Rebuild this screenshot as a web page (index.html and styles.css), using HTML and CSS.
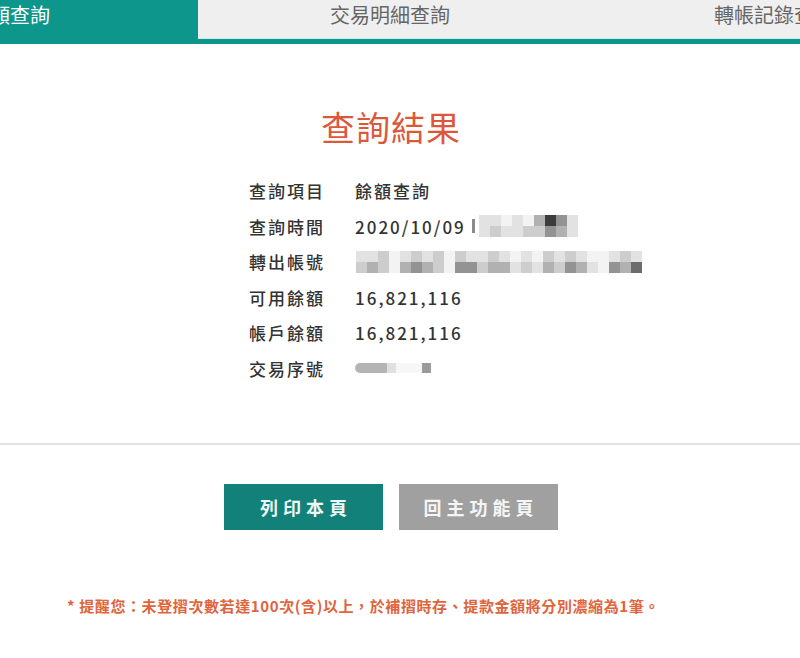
FILE: index.html
```html
<!DOCTYPE html>
<html lang="zh-Hant">
<head>
<meta charset="utf-8">
<title>查詢結果</title>
<link rel="stylesheet" href="styles.css">
</head>
<body>
<nav class="tabs">
  <div class="tab tab-active">餘額查詢</div>
  <div class="tab">交易明細查詢</div>
  <div class="tab">轉帳記錄查詢</div>
</nav>

<main class="main">
  <h1 class="title">查詢結果</h1>

  <dl class="result">
    <div class="row"><dt>查詢項目</dt><dd>餘額查詢</dd></div>
    <div class="row"><dt>查詢時間</dt><dd>2020/10/09 <span class="sliver"></span><span class="mosaic">
      <span class="mrow"><i class="c1"></i><i class="c1"></i><i class="c0"></i><i class="c1"></i><i class="c0"></i><i class="c3"></i><i class="c6"></i><i class="c4"></i><i class="c1"></i></span>
      <span class="mrow"><i class="c1"></i><i class="c2"></i><i class="c1"></i><i class="c1"></i><i class="c2"></i><i class="c2"></i><i class="c4"></i><i class="c3"></i><i class="c1"></i></span>
    </span></dd></div>
    <div class="row"><dt>轉出帳號</dt><dd><span class="mosaic">
      <span class="mrow"><i class="c1"></i><i class="c1"></i><i class="c2"></i><i class="c0"></i><i class="c1"></i><i class="c2"></i><i class="c1"></i><i class="c2"></i><i class="c0"></i><i class="c2"></i><i class="c1"></i><i class="c1"></i><i class="c2"></i><i class="c1"></i><i class="c0"></i><i class="c1"></i><i class="c0"></i><i class="c2"></i><i class="c1"></i><i class="c2"></i><i class="c1"></i><i class="c0"></i><i class="c0"></i><i class="c1"></i><i class="c2"></i><i class="c1"></i></span>
      <span class="mrow"><i class="c2"></i><i class="c3"></i><i class="c2"></i><i class="c0"></i><i class="c3"></i><i class="c4"></i><i class="c3"></i><i class="c2"></i><i class="c0"></i><i class="c4"></i><i class="c4"></i><i class="c2"></i><i class="c3"></i><i class="c3"></i><i class="c1"></i><i class="c2"></i><i class="c1"></i><i class="c3"></i><i class="c2"></i><i class="c4"></i><i class="c3"></i><i class="c1"></i><i class="c0"></i><i class="c4"></i><i class="c3"></i><i class="c5"></i></span>
    </span></dd></div>
    <div class="row"><dt>可用餘額</dt><dd>16,821,116</dd></div>
    <div class="row"><dt>帳戶餘額</dt><dd>16,821,116</dd></div>
    <div class="row"><dt>交易序號</dt><dd><span class="seq"><i class="s-bar"></i><i class="s-light"></i><i class="s-gap"></i><i class="s-dot"></i></span></dd></div>
  </dl>
</main>

<hr class="divider">

<div class="actions">
  <button class="btn btn-primary" type="button">列印本頁</button>
  <button class="btn btn-secondary" type="button">回主功能頁</button>
</div>

<p class="note">* 提醒您：未登摺次數若達100次(含)以上，於補摺時存、提款金額將分別濃縮為1筆。</p>
</body>
</html>
```

FILE: styles.css
```css
* { box-sizing: border-box; }

html, body {
  margin: 0;
  padding: 0;
  background: #ffffff;
}

body {
  width: 800px;
  height: 658px;
  overflow: hidden;
  font-family: "Noto Sans CJK TC", "Noto Sans", "Liberation Sans", sans-serif;
  color: #333333;
}

/* ---------- tabs ---------- */
.tabs {
  display: flex;
  margin-left: -186px;
  width: 1152px;
  height: 44px;
  border-bottom: 5px solid #0c968c;
  background: #efefef;
}

.tab {
  flex: 0 0 384px;
  height: 39px;
  line-height: 30px;
  text-align: center;
  font-size: 20px;
  color: #666666;
  border-bottom: 1px solid #c9f0ec;
}

.tab-active {
  background: #0c968c;
  color: #ffffff;
  border-bottom: none;
  padding-left: 8px;
}

/* ---------- result ---------- */
.main {
  width: 782px;
}

.title {
  margin: 62px 0 0;
  text-align: center;
  font-size: 34px;
  line-height: 41px;
  font-weight: normal;
  color: #dc583a;
  letter-spacing: 1px;
}

.result {
  margin: 26px 0 0 249px;
  padding: 0;
}

.row {
  display: flex;
  align-items: center;
  height: 35.5px;
  font-size: 17px;
  font-weight: 500;
  letter-spacing: 2px;
  color: #333333;
}

.row dt {
  width: 106px;
  flex: 0 0 106px;
  margin: 0;
}

.row dd {
  margin: 0;
  display: flex;
  align-items: center;
  white-space: pre;
}

.sliver {
  display: inline-block;
  width: 3px;
  height: 14px;
  margin-right: 3px;
  background: #8a8a8a;
}

.mosaic {
  display: inline-flex;
  flex-direction: column;
  margin-left: 1px;
}

.mrow {
  display: flex;
}

.mrow i {
  display: block;
  width: 11px;
  height: 11px;
}

.c0 { background: #f3f3f3; }
.c1 { background: #e2e2e2; }
.c2 { background: #cdcdcd; }
.c3 { background: #b1b1b1; }
.c4 { background: #939393; }
.c5 { background: #6c6c6c; }
.c6 { background: #3c3c3c; }

.seq {
  display: inline-flex;
  align-items: center;
  height: 12px;
}

.seq i { display: block; height: 10px; }
.s-bar { width: 32px; background: #b4b4b4; border-radius: 5px 0 0 5px; }
.s-light { width: 9px; background: #e0e0e0; }
.s-gap { width: 26px; background: #f6f6f6; }
.s-dot { width: 9px; height: 9px; background: #9a9a9a; }

/* ---------- divider ---------- */
.divider {
  margin: 57px 0 0;
  border: none;
  height: 2px;
  background: #e2e2e2;
}

/* ---------- buttons ---------- */
.actions {
  width: 782px;
  display: flex;
  justify-content: center;
  gap: 16px;
  margin-top: 39px;
}

.btn {
  width: 159px;
  height: 46px;
  border: none;
  font-family: "Noto Sans CJK TC", "Noto Sans", sans-serif;
  font-size: 18px;
  font-weight: bold;
  letter-spacing: 5px;
  padding: 0 0 0 5px;
  color: #eef8f6;
  cursor: pointer;
}

.btn-primary { background: #12817a; }
.btn-secondary { background: #a0a0a0; color: #f5f5f5; }

/* ---------- note ---------- */
.note {
  margin: 66px 0 0 67px;
  font-size: 15px;
  line-height: 20px;
  font-weight: bold;
  letter-spacing: 0.6px;
  color: #e0643c;
  white-space: nowrap;
}
```
